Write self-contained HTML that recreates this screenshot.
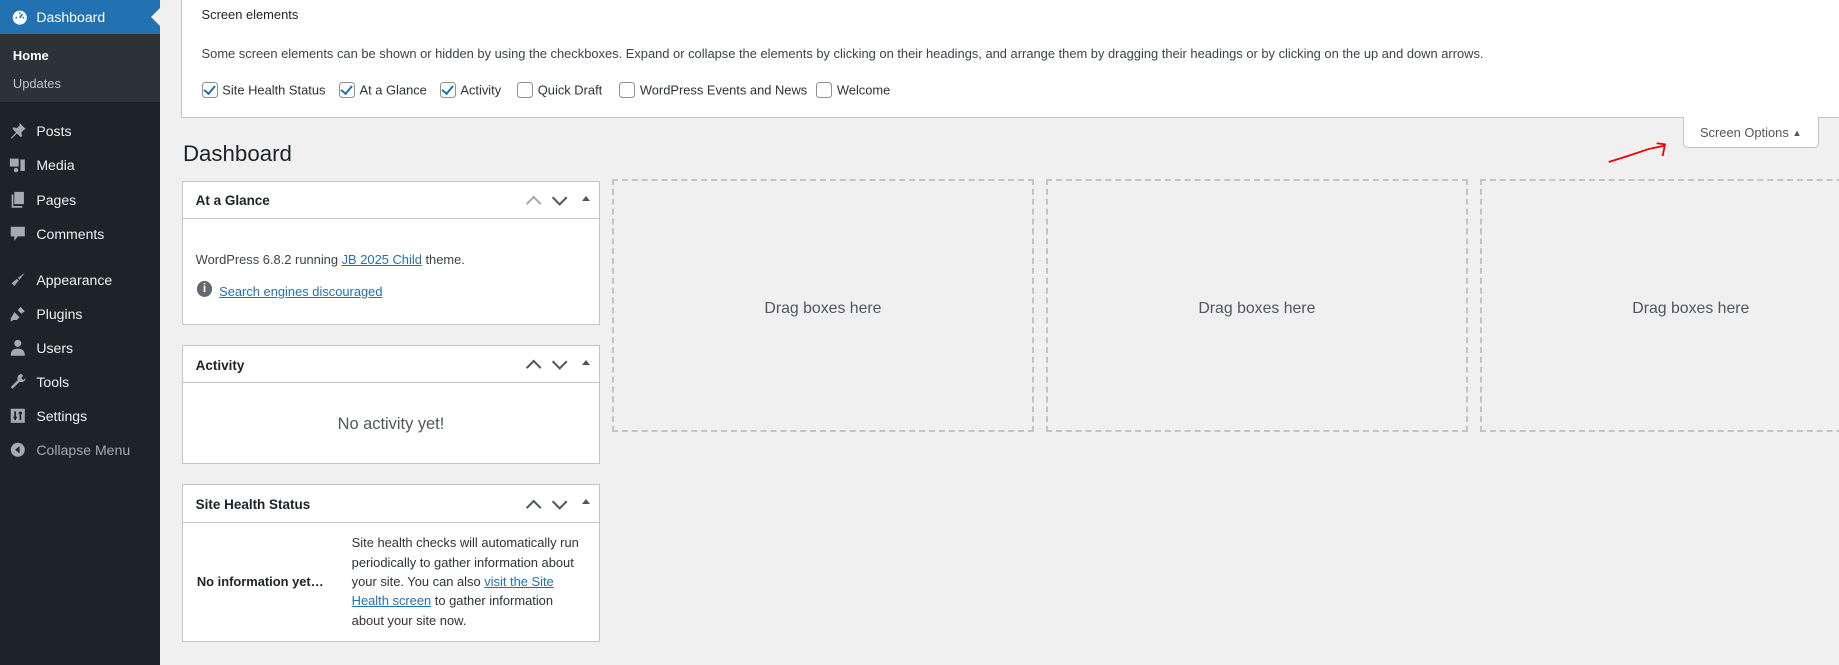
<!DOCTYPE html>
<html><head><meta charset="utf-8"><style>
html{zoom:1.1728}
body{margin:0;width:1568px;height:567px;overflow:hidden;background:#f0f0f1;font-family:"Liberation Sans",sans-serif;font-size:11px;color:#3c434a;position:relative}
.sb{position:absolute;left:0;top:0;width:136px;height:567px;background:#1d2327}
.dash{position:absolute;left:0;top:0;width:136px;height:29px;background:#2271b1;color:#fff;font-size:12px}
.dash span{position:absolute;left:31px;top:8px}
.notch{position:absolute;right:0;top:7px;width:0;height:0;border-top:8px solid transparent;border-bottom:8px solid transparent;border-right:8px solid #f0f0f1}
.sub{position:absolute;top:29px;left:0;width:136px;height:58px;background:#2c3338}
.sub div{position:absolute;left:11px;font-size:11px}
.mi{position:absolute;left:31px;color:#f0f0f1;font-size:12px}
.ic{position:absolute;left:8px;width:15px;height:15px}
.so{position:absolute;left:154px;top:-1px;width:1420px;height:101px;background:#fff;border-left:1px solid #c3c4c7;border-bottom:1px solid #c3c4c7}
.so .t{position:absolute;left:17px;top:7px;color:#1d2327;font-size:11px}
.so .p{position:absolute;left:17px;top:40px;font-size:11px}
.cb{position:absolute;top:71px;font-size:11px;color:#2c3338}
.cb i{display:inline-block;width:12px;height:12px;border:1px solid #8c8f94;border-radius:3px;vertical-align:-3px;margin-right:4px;position:relative;background:#fff}
.cb i.k:after{content:"";position:absolute;left:3px;top:0px;width:4px;height:8px;border:solid #2271b1;border-width:0 2px 2px 0;transform:rotate(40deg)}
.tab{position:absolute;left:1435px;top:100px;width:114px;height:25px;background:#fff;border:1px solid #c3c4c7;border-top:none;border-radius:0 0 4px 4px;font-size:11px;color:#50575e;text-align:center;line-height:27px}
h1{position:absolute;left:156px;top:120px;margin:0;font-weight:400;font-size:19px;color:#1d2327}
.pb{position:absolute;left:155px;width:355px;background:#fff;border:1px solid #c3c4c7}
.pb .h{height:31px;border-bottom:1px solid #c3c4c7;position:relative}
.pb .h b{position:absolute;left:11px;top:10px;font-size:11.5px;color:#1d2327;font-weight:700}
.hd{position:absolute;top:10px;width:8px;height:8px;border:solid #50575e;border-width:2px 0 0 2px}
.tri{position:absolute;right:8px;top:12px;border-left:4px solid transparent;border-right:4px solid transparent;border-bottom:5px solid #50575e}
a{color:#2271b1;text-decoration:underline}
.dz{position:absolute;top:153px;width:356px;height:212px;border:2px dashed #c3c4c7;text-align:center;line-height:218px;font-size:13.5px;color:#50575e}
</style></head><body>
<div class="sb">
 <div class="dash"><svg class="ic" style="top:7px;left:9px" viewBox="0 0 20 20"><circle cx="10" cy="11" r="8" fill="#fff"/><path d="M10 11l3-4" stroke="#2271b1" stroke-width="2"/><circle cx="6" cy="11" r="1" fill="#2271b1"/><circle cx="14" cy="11" r="1" fill="#2271b1"/><circle cx="10" cy="6" r="1" fill="#2271b1"/></svg><span>Dashboard</span><div class="notch"></div></div>
 <div class="sub"><div style="top:12px;color:#fff;font-weight:700">Home</div><div style="top:36px;color:#c3c4c7">Updates</div></div>
 <svg class="ic" style="top:104px" viewBox="0 0 20 20"><path d="M12 1l7 7-2 1-3 3 1 4-2 1-4-4-6 6-1-1 6-6-4-4 1-2 4 1 3-3z" fill="#a7aaad"/></svg><div class="mi" style="top:105px">Posts</div>
 <svg class="ic" style="top:133px" viewBox="0 0 20 20"><rect x="1" y="3" width="10" height="9" fill="#a7aaad"/><rect x="13" y="4" width="5" height="13" fill="#a7aaad"/><circle cx="8" cy="16" r="2.5" fill="#a7aaad"/></svg><div class="mi" style="top:134px">Media</div>
 <svg class="ic" style="top:163px" viewBox="0 0 20 20"><path d="M6 1h11v14H6z M3 4h2v13h10v2H3z" fill="#a7aaad"/></svg><div class="mi" style="top:164px">Pages</div>
 <svg class="ic" style="top:192px" viewBox="0 0 20 20"><path d="M2 2h16v11h-8l-4 5v-5H2z" fill="#a7aaad"/></svg><div class="mi" style="top:193px">Comments</div>
 <svg class="ic" style="top:231px" viewBox="0 0 20 20"><path d="M18 2l-8 6 2 2 6-8z M9 9l-6 5 3 3 5-6z" fill="#a7aaad"/></svg><div class="mi" style="top:232px">Appearance</div>
 <svg class="ic" style="top:260px" viewBox="0 0 20 20"><path d="M13 2l-3 4 4 4 4-3z M6 8l6 6-3 3H5l-3 2v-4l2-3z" fill="#a7aaad"/></svg><div class="mi" style="top:261px">Plugins</div>
 <svg class="ic" style="top:289px" viewBox="0 0 20 20"><circle cx="10" cy="5" r="4" fill="#a7aaad"/><path d="M2 19c0-6 3-8 8-8s8 2 8 8z" fill="#a7aaad"/></svg><div class="mi" style="top:290px">Users</div>
 <svg class="ic" style="top:318px" viewBox="0 0 20 20"><path d="M14 1a5 5 0 00-4 7l-8 8 2 2 8-8a5 5 0 007-4l-3 2-2-2 2-3z" fill="#a7aaad"/></svg><div class="mi" style="top:319px">Tools</div>
 <svg class="ic" style="top:347px" viewBox="0 0 20 20"><rect x="2" y="2" width="16" height="16" fill="#a7aaad"/><path d="M7 5v10M13 5v10M5 12h4M11 7h4" stroke="#1d2327" stroke-width="2"/></svg><div class="mi" style="top:348px">Settings</div>
 <svg class="ic" style="top:376px" viewBox="0 0 20 20"><circle cx="10" cy="10" r="8" fill="#a7aaad"/><path d="M12 6l-5 4 5 4z" fill="#1d2327"/></svg><div class="mi" style="top:377px;color:#a7aaad">Collapse Menu</div>
</div>
<div class="so">
 <div class="t">Screen elements</div>
 <div class="p">Some screen elements can be shown or hidden by using the checkboxes. Expand or collapse the elements by clicking on their headings, and arrange them by dragging their headings or by clicking on the up and down arrows.</div>
 <div class="cb" style="left:17px"><i class="k"></i>Site Health Status</div>
 <div class="cb" style="left:134px"><i class="k"></i>At a Glance</div>
 <div class="cb" style="left:220px"><i class="k"></i>Activity</div>
 <div class="cb" style="left:286px"><i></i>Quick Draft</div>
 <div class="cb" style="left:373px"><i></i>WordPress Events and News</div>
 <div class="cb" style="left:541px"><i></i>Welcome</div>
</div>
<div class="tab">Screen Options <span style="font-size:8px;vertical-align:1px">▲</span></div>
<svg style="position:absolute;left:1368px;top:115px" width="60" height="30"><path d="M4 23 L20 18 L38 12 L52 9 M45 7 L52 8 L50 18" stroke="#e00" stroke-width="1.5" fill="none"/></svg>
<h1>Dashboard</h1>
<div class="pb" style="top:154px;height:121px"><div class="h"><b>At a Glance</b><div class="hd" style="right:51px;top:14px;transform:rotate(45deg);border-color:#a7aaad"></div><div class="hd" style="right:29px;top:9px;transform:rotate(225deg)"></div><div class="tri"></div></div>
 <div style="position:absolute;left:11px;top:60px;font-size:11px">WordPress 6.8.2 running <a>JB 2025 Child</a> theme.</div>
 <div style="position:absolute;left:12px;top:85px;width:13px;height:13px;border-radius:50%;background:#646970;color:#fff;font-size:10px;font-weight:700;text-align:center;line-height:13px">i</div>
 <div style="position:absolute;left:31px;top:87px;font-size:11px"><a>Search engines discouraged</a></div>
</div>
<div class="pb" style="top:294px;height:100px"><div class="h"><b>Activity</b><div class="hd" style="right:51px;top:14px;transform:rotate(45deg)"></div><div class="hd" style="right:29px;top:9px;transform:rotate(225deg)"></div><div class="tri"></div></div>
 <div style="position:absolute;left:0;right:0;top:59px;text-align:center;font-size:14px;color:#50575e">No activity yet!</div></div>
<div class="pb" style="top:413px;height:133px"><div class="h"><b>Site Health Status</b><div class="hd" style="right:51px;top:14px;transform:rotate(45deg)"></div><div class="hd" style="right:29px;top:9px;transform:rotate(225deg)"></div><div class="tri"></div></div>
 <div style="position:absolute;left:12px;top:76px;font-weight:700;font-size:11px;color:#1d2327">No information yet…</div>
 <div style="position:absolute;left:144px;top:41px;width:198px;font-size:11px;line-height:16.5px;color:#2c3338">Site health checks will automatically run periodically to gather information about your site. You can also <a>visit the Site Health screen</a> to gather information about your site now.</div></div>
<div class="dz" style="left:522px">Drag boxes here</div>
<div class="dz" style="left:892px">Drag boxes here</div>
<div class="dz" style="left:1262px">Drag boxes here</div>
</body></html>
